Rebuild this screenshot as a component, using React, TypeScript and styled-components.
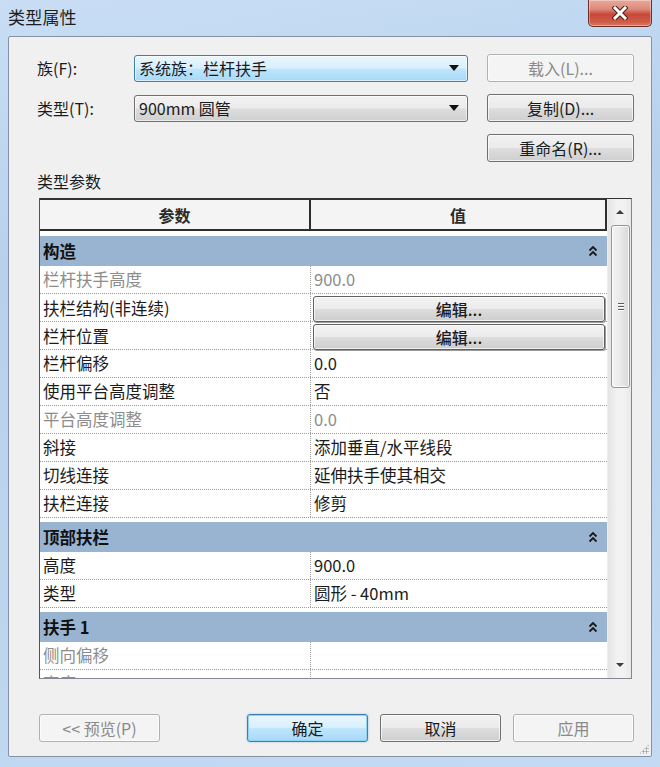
import React from "react";
import styled, { createGlobalStyle } from "styled-components";

const Global = createGlobalStyle`
  html, body { margin: 0; padding: 0; }
  body {
    width: 660px; height: 767px; overflow: hidden;
    font-family: "Noto Sans CJK SC", "Microsoft YaHei", sans-serif;
    color: #1b1b1b;
  }
  * { box-sizing: border-box; }
`;

const Window = styled.div`
  width: 660px;
  height: 767px;
  display: flex;
  flex-direction: column;
  padding: 0 8px 10px 8px;
  background: linear-gradient(170deg, #c9def5 0%, #b7d1ed 30%, #bcd5ef 70%, #c3daf2 100%);
`;

const TitleBar = styled.div`
  height: 36px;
  display: flex;
  justify-content: space-between;
  align-items: flex-start;
`;

const Title = styled.div`
  font-size: 17px;
  line-height: 20px;
  padding-top: 7px;
  color: #1e1e1e;
  letter-spacing: 0.2px;
`;

const CloseButton = styled.div`
  width: 64px;
  height: 27px;
  display: flex;
  align-items: center;
  justify-content: center;
  border: 1px solid #6b2f28;
  border-top: none;
  border-radius: 0 0 5px 5px;
  background: linear-gradient(180deg, #e9a99b 0%, #dc8a7a 35%, #c8473a 55%, #cf5c48 85%, #d97a64 100%);
  box-shadow: inset 0 0 0 1px rgba(255, 255, 255, 0.35);
`;

const Client = styled.div`
  flex: 1;
  position: relative;
  display: flex;
  flex-direction: column;
  background: #f0f0f0;
  border: 1px solid #8393a6;
  border-radius: 2px;
  padding: 17px 17px 14px 30px;
`;

const Form = styled.div`
  display: grid;
  grid-template-columns: 76px 334px 1fr;
  grid-auto-rows: 28px;
  column-gap: 19px;
  row-gap: 12px;
`;

const Label = styled.div`
  font-size: 16px;
  line-height: 28px;
  margin-left: -2px;
  color: #1b1b1b;
  white-space: nowrap;
`;

const Combo = styled.div<{ $focused?: boolean }>`
  align-self: center;
  height: 27px;
  display: flex;
  align-items: center;
  justify-content: space-between;
  padding: 0 8px 0 4px;
  border-radius: 3px;
  font-size: 16px;
  color: #1b1b1b;
  border: 1px solid ${(p) => (p.$focused ? "#3c7fb1" : "#707070")};
  background: ${(p) =>
    p.$focused
      ? "linear-gradient(180deg, #eaf6fd 0%, #d9f0fc 48%, #bee6fd 52%, #a7d9f5 100%)"
      : "linear-gradient(180deg, #f2f2f2 0%, #ebebeb 48%, #dddddd 52%, #cfcfcf 100%)"};
  box-shadow: inset 0 0 0 1px rgba(255, 255, 255, 0.6);
`;

const ComboText = styled.span`
  line-height: 25px;
`;

const DropArrow = styled.span`
  width: 0;
  height: 0;
  border-left: 5px solid transparent;
  border-right: 5px solid transparent;
  border-top: 6px solid #111;
`;

const Button = styled.div<{ $variant?: "normal" | "disabled" | "default"; $col?: number }>`
  grid-column: ${(p) => p.$col ?? "auto"};
  height: 28px;
  display: flex;
  align-items: center;
  justify-content: center;
  font-size: 16px;
  border-radius: 3px;
  color: ${(p) => (p.$variant === "disabled" ? "#8a8a8a" : "#1b1b1b")};
  border: 1px solid
    ${(p) =>
      p.$variant === "disabled" ? "#adb2b5" : p.$variant === "default" ? "#3c7fb1" : "#707070"};
  background: ${(p) =>
    p.$variant === "disabled"
      ? "#f4f4f4"
      : p.$variant === "default"
      ? "linear-gradient(180deg, #eaf6fd 0%, #d9f0fc 48%, #bee6fd 52%, #a7d9f5 100%)"
      : "linear-gradient(180deg, #f2f2f2 0%, #ebebeb 48%, #dddddd 52%, #cfcfcf 100%)"};
  box-shadow: ${(p) =>
    p.$variant === "default"
      ? "inset 0 0 0 1px #8fd3f5, 0 0 2px rgba(60,127,177,0.5)"
      : "inset 0 0 0 1px rgba(255,255,255,0.7)"};
`;

const SectionLabel = styled.div`
  margin-top: 8px;
  margin-left: -2px;
  font-size: 16px;
  line-height: 22px;
  color: #1b1b1b;
`;

const TableFrame = styled.div`
  margin-top: 6px;
  margin-right: 2px;
  height: 481px;
  display: flex;
  border: 1px solid #828790;
  border-left-color: #555;
  border-top-color: #333;
  background: #fff;
`;

const Grid = styled.div`
  flex: 1;
  display: flex;
  flex-direction: column;
  overflow: hidden;
  background: #fff;
`;

const HeaderRow = styled.div`
  flex: none;
  height: 32px;
  display: grid;
  grid-template-columns: 271px 1fr;
  background: #f4f4f4;
  border-top: 1px solid #333;
  border-bottom: 2px solid #2e2e2e;
`;

const HeaderCell = styled.div`
  display: flex;
  align-items: center;
  justify-content: center;
  font-size: 16px;
  font-weight: 700;
  color: #2a2a2a;
  border-right: 2px solid #2e2e2e;
`;

const GroupRow = styled.div<{ $first?: boolean }>`
  flex: none;
  height: 30px;
  margin-top: ${(p) => (p.$first ? "5px" : "4px")};
  display: flex;
  align-items: center;
  justify-content: space-between;
  padding: 0 9px 0 3px;
  background: #99b4d1;
  font-size: 16.5px;
  font-weight: 700;
  color: #111;
`;

const DataRow = styled.div`
  flex: none;
  height: 28px;
  display: grid;
  grid-template-columns: 271px 1fr;
  border-bottom: 1px dotted #9a9a9a;
`;

const Cell = styled.div<{ $muted?: boolean; $name?: boolean }>`
  display: flex;
  align-items: center;
  padding: 0 3px;
  font-size: 16.5px;
  line-height: 27px;
  white-space: nowrap;
  color: ${(p) => (p.$muted ? "#8c8c8c" : "#1b1b1b")};
  border-right: ${(p) => (p.$name ? "1px dotted #9a9a9a" : "none")};
`;

const ButtonCell = styled.div`
  display: flex;
  padding: 2px 2px 1px 2px;
`;

const EditButton = styled.div`
  flex: 1;
  display: flex;
  align-items: center;
  justify-content: center;
  font-size: 16px;
  font-weight: 500;
  color: #1b1b1b;
  border: 1px solid #5f5f5f;
  border-radius: 3px;
  background: linear-gradient(180deg, #f3f3f3 0%, #ebebeb 48%, #dddddd 52%, #cdcdcd 100%);
  box-shadow: inset 0 0 0 1px rgba(255, 255, 255, 0.7), 1px 1px 0 #9a9a9a;
`;

const ScrollBar = styled.div`
  width: 24px;
  flex: none;
  display: flex;
  flex-direction: column;
  background: linear-gradient(90deg, #e4e4e4 0%, #f2f2f2 40%, #f2f2f2 70%, #e8e8e8 100%);
  border-left: 1px solid #ededed;
`;

const ScrollArrow = styled.div<{ $down?: boolean }>`
  height: 26px;
  flex: none;
  display: flex;
  align-items: center;
  justify-content: center;
  &::after {
    content: "";
    width: 0;
    height: 0;
    border-left: 4px solid transparent;
    border-right: 4px solid transparent;
    ${(p) => (p.$down ? "border-top: 4px solid #3d3d3d;" : "border-bottom: 4px solid #3d3d3d;")}
  }
`;

const Thumb = styled.div`
  height: 163px;
  flex: none;
  margin: 0 1px 0 3px;
  display: flex;
  flex-direction: column;
  align-items: center;
  justify-content: center;
  gap: 2px;
  border: 1px solid #959595;
  border-radius: 3px;
  background: linear-gradient(90deg, #f4f4f4 0%, #e9e9e9 50%, #d8d8d8 100%);
  box-shadow: inset 0 0 0 1px rgba(255, 255, 255, 0.8);
`;

const GripLine = styled.span`
  width: 6px;
  height: 1px;
  background: #5a5a5a;
  box-shadow: 0 1px 0 #fff;
`;

const Spacer = styled.div`
  flex: 1;
`;

const Footer = styled.div`
  margin-top: 35px;
  display: flex;
  align-items: center;
`;

const FooterButtons = styled.div`
  margin-left: auto;
  display: flex;
  gap: 12px;
`;

const FooterButton = styled(Button)`
  width: 121px;
`;

const ResizeGrip = styled.div`
  position: absolute;
  right: 2px;
  bottom: 2px;
  width: 10px;
  height: 10px;
  background-image: radial-gradient(circle, #9aa3ad 0.9px, transparent 1.2px);
  background-size: 3px 3px;
  clip-path: polygon(100% 0, 100% 100%, 0 100%);
`;

const Chevrons = () => (
  <svg width="10" height="12" viewBox="0 0 10 12">
    <path d="M1.5 5.5 L5 2 L8.5 5.5 M1.5 10.5 L5 7 L8.5 10.5" fill="none" stroke="#1a1a1a" strokeWidth="1.8" />
  </svg>
);

const CloseX = () => (
  <svg width="16" height="14" viewBox="0 0 16 14">
    <path d="M3 2 L13 12 M13 2 L3 12" stroke="#4a1e18" strokeWidth="5" strokeLinecap="square" />
    <path d="M3 2 L13 12 M13 2 L3 12" stroke="#ffffff" strokeWidth="3" strokeLinecap="square" />
  </svg>
);

type Row =
  | { kind: "group"; name: string }
  | { kind: "data"; name: string; value?: string; muted?: boolean; edit?: boolean };

const rows: Row[] = [
  { kind: "group", name: "构造" },
  { kind: "data", name: "栏杆扶手高度", value: "900.0", muted: true },
  { kind: "data", name: "扶栏结构(非连续)", edit: true },
  { kind: "data", name: "栏杆位置", edit: true },
  { kind: "data", name: "栏杆偏移", value: "0.0" },
  { kind: "data", name: "使用平台高度调整", value: "否" },
  { kind: "data", name: "平台高度调整", value: "0.0", muted: true },
  { kind: "data", name: "斜接", value: "添加垂直/水平线段" },
  { kind: "data", name: "切线连接", value: "延伸扶手使其相交" },
  { kind: "data", name: "扶栏连接", value: "修剪" },
  { kind: "group", name: "顶部扶栏" },
  { kind: "data", name: "高度", value: "900.0" },
  { kind: "data", name: "类型", value: "圆形 - 40mm" },
  { kind: "group", name: "扶手 1" },
  { kind: "data", name: "侧向偏移", value: "", muted: true },
  { kind: "data", name: "高度", value: "", muted: true },
];

export default function App() {
  return (
    <>
      <Global />
      <Window>
        <TitleBar>
          <Title>类型属性</Title>
          <CloseButton>
            <CloseX />
          </CloseButton>
        </TitleBar>
        <Client>
          <Form>
            <Label>族(F):</Label>
            <Combo $focused>
              <ComboText>系统族：栏杆扶手</ComboText>
              <DropArrow />
            </Combo>
            <Button $variant="disabled">载入(L)...</Button>
            <Label>类型(T):</Label>
            <Combo>
              <ComboText>900mm 圆管</ComboText>
              <DropArrow />
            </Combo>
            <Button>复制(D)...</Button>
            <Button $col={3}>重命名(R)...</Button>
          </Form>
          <SectionLabel>类型参数</SectionLabel>
          <TableFrame>
            <Grid>
              <HeaderRow>
                <HeaderCell>参数</HeaderCell>
                <HeaderCell>值</HeaderCell>
              </HeaderRow>
              {rows.map((r, i) =>
                r.kind === "group" ? (
                  <GroupRow key={i} $first={i === 0}>
                    <span>{r.name}</span>
                    <Chevrons />
                  </GroupRow>
                ) : (
                  <DataRow key={i}>
                    <Cell $name $muted={r.muted}>
                      {r.name}
                    </Cell>
                    {r.edit ? (
                      <ButtonCell>
                        <EditButton>编辑...</EditButton>
                      </ButtonCell>
                    ) : (
                      <Cell $muted={r.muted}>{r.value}</Cell>
                    )}
                  </DataRow>
                )
              )}
            </Grid>
            <ScrollBar>
              <ScrollArrow />
              <Thumb>
                <GripLine />
                <GripLine />
                <GripLine />
              </Thumb>
              <Spacer />
              <ScrollArrow $down />
            </ScrollBar>
          </TableFrame>
          <Footer>
            <FooterButton $variant="disabled">&lt;&lt; 预览(P)</FooterButton>
            <FooterButtons>
              <FooterButton $variant="default">确定</FooterButton>
              <FooterButton>取消</FooterButton>
              <FooterButton $variant="disabled">应用</FooterButton>
            </FooterButtons>
          </Footer>
          <ResizeGrip />
        </Client>
      </Window>
    </>
  );
}
